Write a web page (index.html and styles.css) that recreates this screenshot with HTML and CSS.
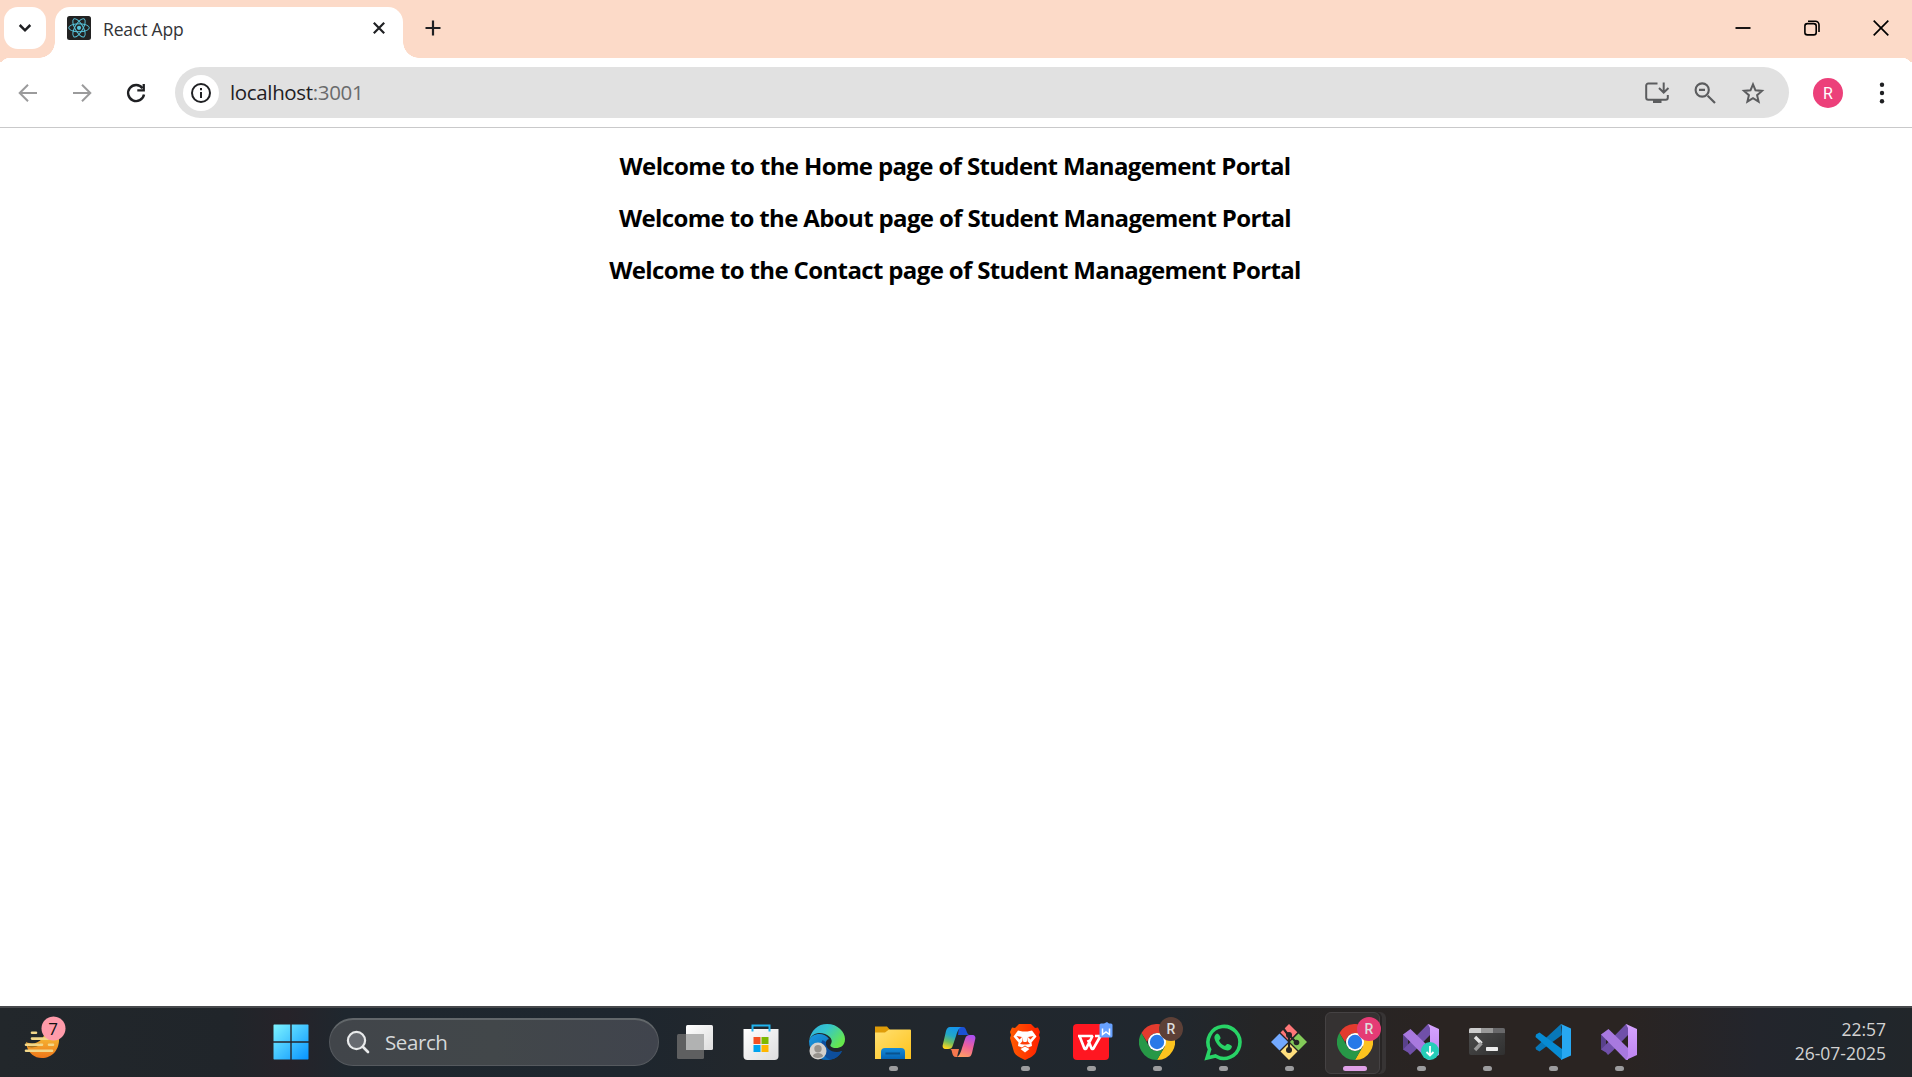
FILE: index.html
```
<!DOCTYPE html>
<html lang="en">
<head>
<meta charset="utf-8">
<title>React App</title>
<link rel="stylesheet" href="styles.css">
</head>
<body>
<header class="tabstrip">
  <button class="tab-search" aria-label="Search tabs"><svg width="42" height="42" viewBox="0 0 42 42"><path d="M15.700 18 21 23.300 26.300 18" fill="none" stroke="#1f2023" stroke-width="2.500"/></svg></button>
  <div class="tab">
    <svg class="favicon" viewBox="0 0 24 24"><rect width="24" height="24" rx="2.500" fill="#222"/><g fill="none" stroke="#58c4dc" stroke-width="1"><ellipse cx="12" cy="11.800" rx="10.300" ry="4"/><ellipse cx="12" cy="11.800" rx="10.300" ry="4" transform="rotate(60 12 11.800)"/><ellipse cx="12" cy="11.800" rx="10.300" ry="4" transform="rotate(120 12 11.800)"/></g><circle cx="12" cy="11.800" r="2.100" fill="#58c4dc"/></svg>
    <span class="tab-title">React App</span>
    <svg class="tab-close" width="12" height="12" viewBox="0 0 12 12"><path d="m.8.8 10.400 10.400M11.200.8.8 11.200" stroke="#1f2023" stroke-width="2.200"/></svg>
  </div>
  <svg class="newtab" width="16" height="16" viewBox="0 0 16 16"><path d="M8 .5v15M.5 8h15" stroke="#1f2023" stroke-width="2.200"/></svg>
  <div class="window-controls">
    <svg viewBox="0 0 16 16"><path d="M.5 8h15" stroke="#000" stroke-width="1.800"/></svg>
    <svg viewBox="0 0 16 16"><g fill="none" stroke="#000" stroke-width="1.600"><rect x=".9" y="3.600" width="11.300" height="11.300" rx="2.500"/><path d="M4 1.200h7.500a3.500 3.500 0 0 1 3.500 3.500V12"/></g></svg>
    <svg viewBox="0 0 16 16"><path d="m.7.7 14.600 14.600M15.300.7.7 15.300" stroke="#000" stroke-width="1.700"/></svg>
  </div>
</header>
<nav class="toolbar">
  <div class="nav-buttons">
    <svg viewBox="0 0 20 20"><path d="M19 10H2.500M10 1.700 1.700 10l8.300 8.300" fill="none" stroke="#9b9b9c" stroke-width="2"/></svg>
    <svg viewBox="0 0 20 20"><path d="M1 10h16.500M10 1.700l8.300 8.300-8.300 8.300" fill="none" stroke="#9b9b9c" stroke-width="2"/></svg>
    <svg viewBox="0 0 20 20"><path d="M16.500 5.200A8 8 0 1 0 18 11.500" fill="none" stroke="#1f2023" stroke-width="2.400"/><path d="M18.900 1v7.600h-7.600V6.300h5.300V1z" fill="#1f2023"/></svg>
  </div>
  <div class="omnibox">
    <span class="site-info"><svg width="20" height="20" viewBox="0 0 20 20"><circle cx="10" cy="10" r="9" fill="none" stroke="#1f2023" stroke-width="2"/><path d="M10 9v6M10 5v2.200" stroke="#1f2023" stroke-width="2"/></svg></span>
    <span class="url">localhost<i>:3001</i></span>
    <div class="omni-actions">
      <svg viewBox="0 0 24 24"><path d="M12.500 2.500H3.200a2 2 0 0 0-2 2v12.200a2 2 0 0 0 2 2h17.600a2 2 0 0 0 2-2V14" fill="none" stroke="#5b5c5e" stroke-width="2"/><path d="M8 18.500h8.500V22H8z" fill="#5b5c5e"/><path d="M18.700 1.500v9M14 7l4.700 4.500L23.500 7" fill="none" stroke="#5b5c5e" stroke-width="2"/></svg>
      <svg viewBox="0 0 24 24"><path d="M14.700 14.700 22 22M6 8.800h6" fill="none" stroke="#5b5c5e" stroke-width="2.200"/><circle cx="9.200" cy="9" r="6.600" fill="none" stroke="#5b5c5e" stroke-width="2.100"/></svg>
      <svg viewBox="0 0 24 24"><path d="m12 3.300 2.500 6 6.500.6-4.900 4.300 1.500 6.400-5.600-3.400-5.600 3.400 1.500-6.400L3 9.900l6.500-.6z" fill="none" stroke="#5b5c5e" stroke-width="2"/></svg>
    </div>
  </div>
  <span class="avatar">R</span>
  <svg class="menu" width="6" height="22" viewBox="0 0 6 22"><g fill="#1f2023"><circle cx="3" cy="2.700" r="2.200"/><circle cx="3" cy="11" r="2.200"/><circle cx="3" cy="19.300" r="2.200"/></g></svg>
</nav>
<main class="page">
  <h3 class="line-home">Welcome to the Home page of Student Management Portal</h3>
  <h3 class="line-about">Welcome to the About page of Student Management Portal</h3>
  <h3 class="line-contact">Welcome to the Contact page of Student Management Portal</h3>
</main>
<footer class="taskbar">
  <svg class="defs" width="0" height="0">
    <defs>
      <linearGradient id="win" gradientUnits="userSpaceOnUse" x1="0" y1="0" x2="36" y2="36"><stop stop-color="#7ff5ff"/><stop offset="1" stop-color="#0592ff"/></linearGradient>
      <linearGradient id="sun" x1="0" y1="0" x2="0" y2="1"><stop stop-color="#f8c83a"/><stop offset="1" stop-color="#ee7619"/></linearGradient>
      <linearGradient id="paper" x1="0" y1="0" x2="1" y2="1"><stop stop-color="#fff"/><stop offset="1" stop-color="#ddd"/></linearGradient>
      <linearGradient id="edgeTop" x1="0" y1="0" x2="1" y2=".6"><stop stop-color="#2eaee0"/><stop offset=".45" stop-color="#35c5cd"/><stop offset="1" stop-color="#66e84c"/></linearGradient>
      <linearGradient id="edgeMid" x1="0" y1="0" x2="1" y2="1"><stop stop-color="#1b9be0"/><stop offset="1" stop-color="#0755a8"/></linearGradient>
      <linearGradient id="folder" x1="0" y1="0" x2="1" y2="1"><stop stop-color="#ffe072"/><stop offset="1" stop-color="#ffc31c"/></linearGradient>
      <linearGradient id="pocket" x1="0" y1="0" x2="0" y2="1"><stop stop-color="#168bd8"/><stop offset="1" stop-color="#0564b5"/></linearGradient>
      <linearGradient id="copA" x1=".6" y1="0" x2=".3" y2="1"><stop stop-color="#1595ed"/><stop offset=".4" stop-color="#22a7c7"/><stop offset=".7" stop-color="#6fbd60"/><stop offset="1" stop-color="#ffd51f"/></linearGradient>
      <linearGradient id="copB" x1=".7" y1="0" x2=".4" y2="1"><stop stop-color="#aa4ff2"/><stop offset=".5" stop-color="#ef609b"/><stop offset="1" stop-color="#ff9b65"/></linearGradient>
      <linearGradient id="brave"><stop stop-color="#ff5a00"/><stop offset="1" stop-color="#ff2000"/></linearGradient>
      <linearGradient id="vsRight" x1="0" y1="0" x2="0" y2="1"><stop stop-color="#d6a4ff"/><stop offset="1" stop-color="#bd84f0"/></linearGradient>
      <linearGradient id="term" x1="0" y1="0" x2="1" y2="1"><stop stop-color="#4d4d4d"/><stop offset="1" stop-color="#303030"/></linearGradient>
      <symbol id="chrome" viewBox="0 0 36 36"><path d="M2.400 9A18 18 0 0 1 33.600 9H18a9 9 0 0 0-7.800 4.500L8 18z" fill="#e33b2e"/><path d="M18 9h15.600A18 18 0 0 1 18 36l7.800-13.500z" fill="#fcc31e"/><path d="M2.400 9A18 18 0 0 0 18 36l7.800-13.500a9 9 0 0 1-15.600 0z" fill="#279847"/><circle cx="18" cy="18" r="9" fill="#fff"/><circle cx="18" cy="18" r="7.200" fill="#2879e8"/></symbol>
      <symbol id="vs" viewBox="0 0 36 36"><path d="M0 10.500 5 8v20l-5-2.800z" fill="#59418b"/><path d="M5 28.500 0 25.500 25 0l2 1v10L11.500 27 7 31z" fill="#7050a9"/><path d="M0 10.500 7.500 5 27 24v12h-2z" fill="#a879df"/><path d="m25 0 11 5v26l-11 5 2-4V4z" fill="url(#vsRight)"/></symbol>
    </defs>
  </svg>
  <div class="widget"><svg width="42" height="44" viewBox="0 0 42 44"><path d="M2 26C12 31 22 22 20 16l15 5c1 13-7 21-17 21-8 0-13-5-15-11z" fill="url(#sun)"/><path d="M4 30c5 1 9 0 12-2" fill="none" stroke="#a57021" stroke-width="2"/><g stroke="#f2d789" stroke-width="2.600" stroke-linecap="round"><path d="M8 16.700h4M8 22.600h16M2 28.700h16M25 28.700h4M2 34.700h26"/></g><circle cx="29.500" cy="12.500" r="12" fill="#ff9baa"/></svg><b>7</b></div>
  <svg class="start" width="36" height="36" viewBox="0 0 36 36"><path d="M1 .5h16.300v16.800H.5V1zM18.700.5H35l.5.5v16.300H18.700zM.5 18.700h16.800v16.800H1L.5 35zM18.700 18.700h16.800V35l-.5.500H18.700z" fill="url(#win)"/></svg>
  <div class="search"><svg width="24" height="24" viewBox="0 0 24 24"><circle cx="10.500" cy="10.500" r="8.600" fill="#666a70" stroke="#e8eaeb" stroke-width="2.200"/><path d="m16.800 16.800 5.200 5.200" stroke="#e8eaeb" stroke-width="2.700" stroke-linecap="round"/></svg><span>Search</span></div>
  <div class="apps">
    <div class="app"><svg viewBox="0 0 36 36"><rect y="10" width="27" height="25" rx="1.500" fill="#5e5f60"/><rect x="9" y="1" width="27" height="25" rx="1.500" fill="url(#paper)"/><path d="M9 10h18v16H9z" fill="#b1b2b2"/></svg></div>
    <div class="app"><svg viewBox="0 0 36 36"><path d="M.5 5h35v27a4 4 0 0 1-4 4h-27a4 4 0 0 1-4-4z" fill="url(#paper)"/><path d="M9.500 7.500v-6h17v6" fill="none" stroke="#20b3ee" stroke-width="2"/><path d="M10.500 13h7v7h-7z" fill="#f35022"/><path d="M18.500 13h7v7h-7z" fill="#7db900"/><path d="M10.500 21h7v7h-7z" fill="#00a3ee"/><path d="M18.500 21h7v7h-7z" fill="#ffb600"/></svg></div>
    <div class="app"><svg viewBox="0 0 36 36"><path d="M0 17C2 9 15 7 20 15c-4 1-5 7 0 12 4 3 9 2 13 0-4 7-10 9-15 9C8 36 0 28 0 17z" fill="url(#edgeMid)"/><path d="M13.500 16c-4 6-1 16 7.500 19.500 5-.5 10-3.500 12-8.500-9 3-17-2-16-9z" fill="#0d4e9c"/><path d="M0 17C2 6 9 0 18 0c11 0 18 8 18 15s-5 9-9 9c-4 0-7-2-5-4 3-5-3-11-12-11C5 9 1 13 0 17z" fill="url(#edgeTop)"/><circle cx="9" cy="27" r="8.500" fill="#d4d1cd"/><circle cx="9" cy="24.700" r="3.700" fill="#96928d"/><path d="M3.800 32c1-4 9.400-4 10.400 0-2 2.600-8.400 2.600-10.400 0z" fill="#96928d"/></svg></div>
    <div class="app run"><svg viewBox="0 0 36 36"><path d="M0 2.500h12l3 3.500H34v6H0z" fill="#df9c08"/><path d="M0 8.500h10L14 5.500h21a1 1 0 0 1 1 1V35H0z" fill="url(#folder)"/><path d="M6 35v-7a4 4 0 0 1 4-4h16a4 4 0 0 1 4 4v7z" fill="url(#pocket)"/><path d="M10.500 29.500h14.500" stroke="#08538f" stroke-width="2"/></svg></div>
    <div class="app"><svg viewBox="0 0 36 36"><path d="M18 3h4c4 0 3 8 7 8H17z" fill="#1b51d5"/><path d="M9 25h9l-2 8h-1c-5 0-3-8-6-8z" fill="#f5774e"/><path d="M9 3h12c-3 0-5 5-6 9l-3 9c-1 3-2 4-5 4H5c-3 0-4-2-3-5L5 7c1-3 2-4 4-4z" fill="url(#copA)"/><path d="M27 33H15c3 0 5-5 6-9l3-9c1-3 2-4 5-4h2c3 0 4 2 3 5l-3 13c-1 3-2 4-4 4z" fill="url(#copB)"/></svg></div>
    <div class="app run"><svg viewBox="0 0 36 36"><path d="m8 4 4-4h12l4 4 3-.5L33 8l-1 3 1 3-4 14c-1 3-6 6-11 8-5-2-10-5-11-8L3 14l1-3-1-3 2-4.500z" fill="url(#brave)"/><path d="m11 6.500 4.500 1h5l4.500-1 4.500 6-5 6 .5 3.500-4 1.500-3-2-3 2-4-1.500.5-3.500-5-6z" fill="#fff"/><path d="m9.500 12 5.500 1-2.500 2.500zm17 0-5.500 1 2.500 2.500zM15 13l.5 4-2.500 3 3.500.5h3l3.500-.5-2.500-3 .5-4-1.500 5h-3z" fill="#ff3f09"/><path d="m13.500 25 4.500-2.500 4.500 2.500-4.500 3.500z" fill="#fff"/></svg></div>
    <div class="app run"><svg viewBox="0 0 36 36"><rect width="36" height="36" rx="4" fill="#ff1721"/><path d="M5 12h14.500L13 24.800h-1.500L6.500 12M15 16l3.700 8.800h1.500L27.500 12H22" fill="none" stroke="#fff" stroke-width="2.700" stroke-linejoin="bevel"/><path d="M28-.5h3l3-1.500 2 1.500h2a1.500 1.500 0 0 1 1.500 1.500v11a1.500 1.500 0 0 1-1.500 1.500H28a1.500 1.500 0 0 1-1.500-1.500V1A1.500 1.500 0 0 1 28-.5z" fill="#67a1ff"/><path d="M29.500 4.500V10.500l3.500-2.500 3.500 2.500V4.500" fill="none" stroke="#fff" stroke-width="1.500"/></svg></div>
    <div class="app run"><svg viewBox="0 0 36 36"><use href="#chrome" width="36" height="36"/></svg><b class="badge brown">R</b></div>
    <div class="app run"><svg viewBox="0 0 36 36"><path d="m2 34 2.600-8.500A16 16 0 1 1 10.500 32z" fill="none" stroke="#28d366" stroke-width="3.600"/><path d="M12 9.500c-2 1-3 3-2.500 5 1.500 6 7 11.500 13 12 2 0 4-1.500 4.500-4 0-1-4-3-5-2.500l-2 2c-3-1-5-3-6-5.500l1.500-2c.5-1-1.500-5-3.500-5z" fill="#28d366"/></svg></div>
    <div class="app run"><svg viewBox="0 0 36 36"><path d="m18 0 8.300 8.300L18 17 9.500 8.500z" fill="#ff7778"/><path d="m8.500 9.500 8.700 8.500-8.700 8.500L0 18z" fill="#73a9ff"/><path d="m27.500 9.500 8.500 8.500-8.500 8.500L18.800 18z" fill="#83cb59"/><path d="m18 19 8.500 8.500L18 36l-8.500-8.500z" fill="#ffdf7d"/><g fill="none" stroke="#252526" stroke-width="2.200"><path d="m12 4 6 8v14M18 11l7 7"/></g><g fill="#252526"><circle cx="18" cy="11" r="3"/><circle cx="25.500" cy="18.500" r="2.800"/><circle cx="18" cy="26" r="3"/></g></svg></div>
    <div class="app run active"><svg viewBox="0 0 36 36"><use href="#chrome" width="36" height="36"/></svg><b class="badge pink">R</b></div>
    <div class="app run"><svg viewBox="0 0 36 36"><use href="#vs" width="36" height="36"/><circle cx="27" cy="27" r="9" fill="#25cdb8"/><path d="M27 22v9M23.500 28l3.500 3.500 3.500-3.500" fill="none" stroke="#fff" stroke-width="1.800"/></svg></div>
    <div class="app run"><svg viewBox="0 0 36 36"><path d="M0 6a2 2 0 0 1 2-2h32a2 2 0 0 1 2 2v23a2 2 0 0 1-2 2H2a2 2 0 0 1-2-2z" fill="url(#term)"/><path d="M0 9V6a2 2 0 0 1 2-2h10v5z" fill="#cdcdcd"/><path d="M12 4h12v5H12z" fill="#999"/><path d="M24 4h10a2 2 0 0 1 2 2v3H24z" fill="#68686a"/><path d="m6 13 6.500 6.500" stroke="#e4e4e4" stroke-width="3.400"/><path d="M12.500 19 6 26" stroke="#999" stroke-width="3.400"/><rect x="17" y="23" width="12" height="4" rx=".7" fill="#ededed"/></svg></div>
    <div class="app run"><svg viewBox="0 0 36 36"><path d="M.5 23.500 26 0l1 11L4.500 27.500 1 25.500z" fill="#0877b8"/><path d="M1 10.500 4.500 8.500 27 25v11L.5 13z" fill="#078bd3"/><path d="m26 0 10 4.500v27L26 36l1-3V3z" fill="#27a8f2"/></svg></div>
    <div class="app run"><svg viewBox="0 0 36 36"><use href="#vs" width="36" height="36"/></svg></div>
  </div>
  <div class="clock"><span class="time">22:57</span><span class="date">26-07-2025</span></div>
</footer>
</body>
</html>
```
FILE: styles.css
```
* { box-sizing: border-box; }
body { margin: 0; height: 1077px; display: flex; flex-direction: column; overflow: hidden; background: #fff; font-family: "Open Sans", "Noto Sans", sans-serif; }
svg { display: block; flex: none; overflow: visible; }
.tabstrip { height: 58px; flex: none; display: flex; align-items: flex-start; padding: 7px 23px 0 4px; background: #fcdac8; }
.tab-search { width: 42px; height: 42px; padding: 0; border: 0; border-radius: 14px; background: #fff; }
.tab { position: relative; width: 348px; height: 51px; margin-left: 9px; padding: 9px 18px 0 12px; display: flex; align-items: flex-start; background: #fff; border-radius: 15px 15px 0 0; }
.tab::before, .tab::after { content: ""; position: absolute; bottom: 0; width: 16px; height: 16px; }
.tab::before { left: -16px; background: radial-gradient(circle at 0 0, transparent 15.500px, #fff 16px); }
.tab::after { right: -16px; background: radial-gradient(circle at 100% 0, transparent 15.500px, #fff 16px); }
.favicon { width: 24px; height: 24px; }
.tab-title { margin-left: 12px; font-size: 17.500px; line-height: 26px; color: #333437; letter-spacing: -.15px; white-space: nowrap; }
.tab-close { margin: 6px 0 0 auto; }
.newtab { margin: 13px 0 0 22px; }
.window-controls { margin: 13px 0 0 auto; display: flex; gap: 53px; }
.window-controls svg { width: 16px; height: 16px; }
.toolbar { height: 70px; flex: none; display: flex; align-items: center; padding: 0 27px 0 18px; border-bottom: 1px solid #c9c9ca; background: radial-gradient(circle at 10px 10px, #fff 10px, #fcdac8 10.500px) 0 0 / 10px 4px no-repeat, radial-gradient(circle at 0 10px, #fff 10px, #fcdac8 10.500px) 100% 0 / 10px 4px no-repeat, #fff; }
.nav-buttons { display: flex; gap: 34px; width: 157px; }
.nav-buttons svg { width: 20px; height: 20px; }
.omnibox { width: 1614px; height: 51px; display: flex; align-items: center; padding: 0 24px 0 8px; border-radius: 26px; background: #e1e1e1; }
.site-info { width: 36px; height: 36px; display: flex; align-items: center; justify-content: center; border-radius: 50%; background: #fff; }
.url { margin-left: 11px; padding-bottom: 2px; font-size: 20.500px; line-height: 30px; letter-spacing: -.35px; color: #1f2023; }
.url i { font-style: normal; color: #6a6b6c; }
.omni-actions { margin-left: auto; display: flex; gap: 24px; }
.omni-actions svg { width: 24px; height: 24px; }
.avatar { width: 30px; height: 30px; margin-left: 24px; border-radius: 50%; background: #ec407a; color: #fff; font: 16px/31px Roboto, sans-serif; text-align: center; }
.menu { margin-left: auto; }
.page { flex: 1; padding: 22px 2px 0 0; text-align: center; }
.page h3 { margin: 0 0 20px; font-size: 24px; line-height: 32px; font-weight: 700; letter-spacing: -.64px; color: #000; white-space: nowrap; }
.taskbar { position: relative; height: 71px; flex: none; display: flex; align-items: flex-start; border-top: 2px solid #47494c; background: linear-gradient(90deg, #22272b 0, #20252a 12%, #262329 15%, #1f272e 18%, #1e262e 33%, #22272c 39%, #20272e 61%, #252526 66%, #2a2422 75%, #2a2422 85%, #23252c 92%, #20262c 97%, #22262a 100%); }
.defs { position: absolute; }
.widget { position: relative; width: 42px; height: 44px; margin: 8px 0 0 24px; }
.widget b { position: absolute; left: 17px; top: 1px; width: 24px; text-align: center; font: 17px/23px "Open Sans", sans-serif; color: #111; }
.start { margin: 16px 0 0 207px; }
.search { width: 330px; height: 48px; margin: 10px 0 0 20px; padding: 0 16px 2px; display: flex; align-items: center; gap: 15px; border: 1px solid #565a5f; border-top: 2px solid #62676a; border-radius: 24px; background: linear-gradient(90deg, #41454a, #42474a 50%, #40444d); color: #d5d8da; font-size: 20.500px; line-height: 28px; letter-spacing: -.4px; }
.apps { display: flex; margin-left: 3px; }
.app { position: relative; width: 66px; height: 69px; padding: 16px 15px 0; }
.app svg { position: relative; width: 36px; height: 36px; }
.run::after { content: ""; position: absolute; left: 28.500px; top: 58px; width: 9px; height: 5px; border-radius: 3px; background: #9c9c9e; }
.active::after { left: 21px; width: 24px; background: #dfa0e7; }
.active::before { content: ""; position: absolute; left: 3px; top: 4px; width: 53px; height: 60px; border: 1px solid #454243; border-radius: 6px; background: #353232; box-shadow: 2px 0 #282525, 6px 0 #373434; }
.badge { position: absolute; left: 35px; top: 9px; width: 24px; height: 24px; border-radius: 50%; font: 500 14px/24px Roboto, sans-serif; text-align: center; color: #ddd; }
.brown { background: #5d4037; }
.pink { background: #e53b75; }
.clock { margin: 9px 26px 0 auto; display: flex; flex-direction: column; align-items: flex-end; font-size: 17.500px; line-height: 24px; color: #d3d2d2; }
```
